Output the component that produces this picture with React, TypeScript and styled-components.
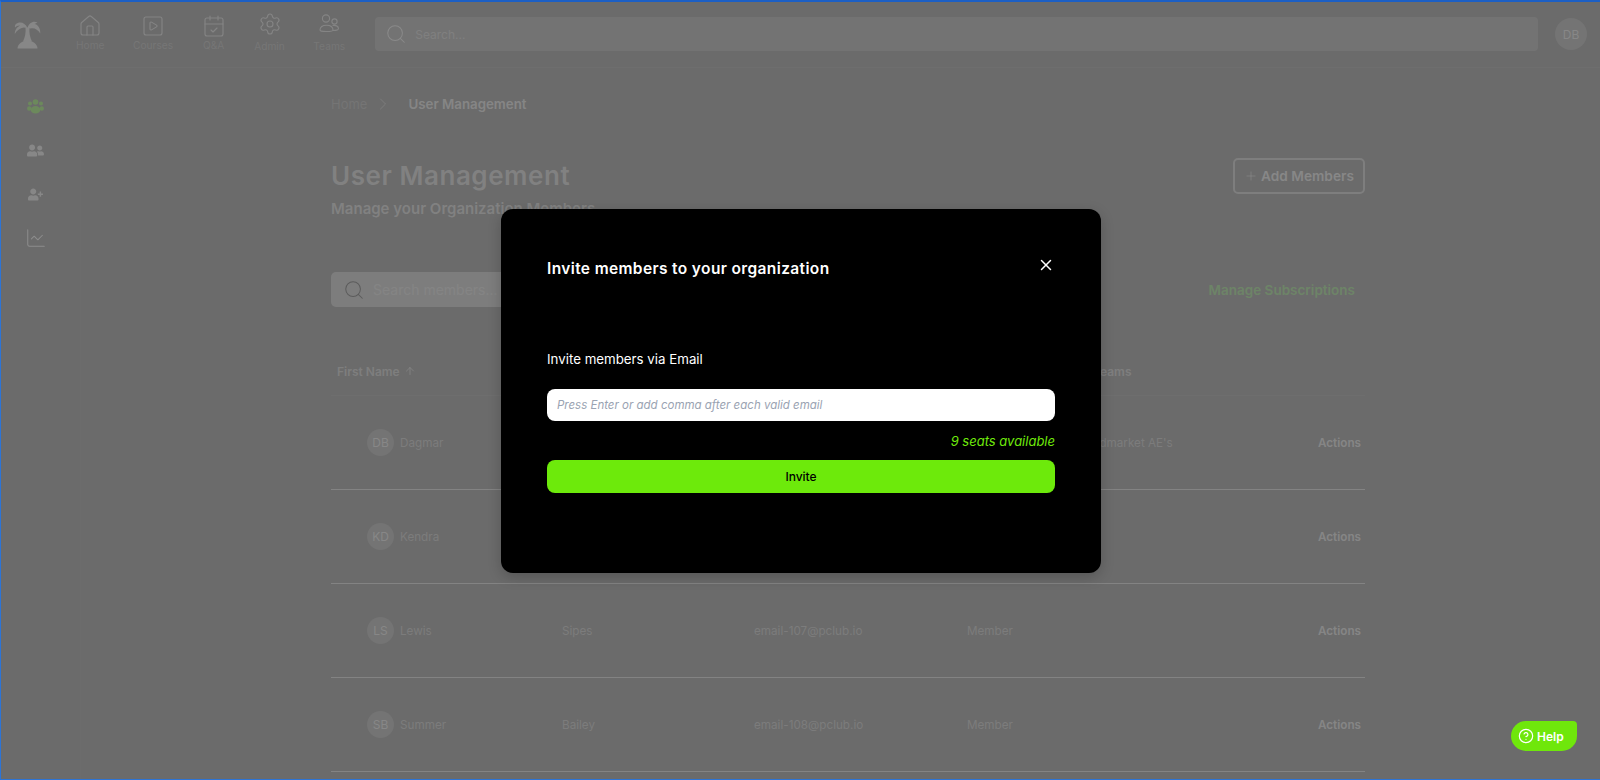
import React from "react";
import styled, { createGlobalStyle } from "styled-components";
import { Home, SquarePlay, CalendarCheck, Settings, Search, ChevronRight, X, Plus, ArrowUp, ChartLine, CircleHelp } from "lucide-react";
import { FaUserFriends, FaUserPlus } from "react-icons/fa";

const Global = createGlobalStyle`
  * { box-sizing: border-box; }
  html, body { margin: 0; padding: 0; height: 100%; overflow: hidden; }
  body { font-family: Inter, "Liberation Sans", sans-serif; background: #6b6b6b; }
`;

const Frame = styled.div`
  position: relative;
  width: 100vw;
  height: 100vh;
  overflow: hidden;
  background: #6b6b6b;
  border-top: 2px solid #1c5fc4;
  border-left: 1px solid #2c74d6;
  border-bottom: 1px solid #2c74d6;
`;

const TopBar = styled.header`
  height: 66px;
  display: flex;
  align-items: stretch;
  padding: 0 13px 0 13px;
  border-bottom: 1px solid #757575;
`;

const Logo = styled.svg`
  width: 27px;
  height: 29px;
  margin-top: 18px;
  color: #c8c8c8;
  flex: none;
`;

const Nav = styled.nav`
  display: flex;
  gap: 28.5px;
  margin-left: 35px;
  margin-right: 30px;
`;

const NavItem = styled.div<{ $low?: boolean }>`
  display: flex;
  flex-direction: column;
  align-items: center;
  color: #c0c0c0;
  font-size: 10.2px;
  line-height: 14px;
  padding-top: ${(p) => (p.$low ? 10 : 12)}px;
  span { margin-top: ${(p) => (p.$low ? 3 : 0)}px; color: #909090; }
  svg { display: block; }
`;

const TopSearch = styled.div`
  flex: 1;
  height: 34px;
  margin-top: 15px;
  border-radius: 4px;
  background: #878787;
  display: flex;
  align-items: center;
  padding-left: 10px;
  gap: 8px;
  font-size: 12px;
  color: #b0b0b0;
  svg { color: #d0d0d0; }
`;

const Avatar = styled.div<{ $size: number; $font: number }>`
  width: ${(p) => p.$size}px;
  height: ${(p) => p.$size}px;
  flex: none;
  border-radius: 50%;
  background: #898989;
  color: #c8c8c8;
  font-size: ${(p) => p.$font}px;
  display: flex;
  align-items: center;
  justify-content: center;
`;

const TopAvatar = styled(Avatar)`
  margin-top: 16px;
  margin-left: 17px;
`;

const Body = styled.div`
  display: flex;
`;

const Sidebar = styled.aside`
  width: 80px;
  height: 720px;
  flex: none;
  border-right: 1px solid #6f6f6f;
  display: flex;
  flex-direction: column;
  align-items: center;
  padding-top: 16px;
  padding-right: 11px;
`;

const SideItem = styled.div<{ $green?: boolean }>`
  height: 44px;
  display: flex;
  align-items: center;
  justify-content: center;
  color: ${(p) => (p.$green ? "#71d03a" : "#c8c8c8")};
`;

const ChartIcon = styled(ChartLine)`
  margin-left: 2px;
  color: #dcdcdc;
`;

const Main = styled.main`
  width: 1034px;
  margin-left: 250px;
  padding-top: 26px;
  flex: none;
`;

const Crumbs = styled.div`
  display: flex;
  align-items: center;
  height: 20px;
  font-size: 13px;
  color: #8c8c8c;
  svg { margin: 0 15px 0 6px; color: #b0b0b0; }
  b { font-size: 13.3px; font-weight: 600; color: #c4c4c4; }
`;

const HeadRow = styled.div`
  display: flex;
  justify-content: space-between;
  margin-top: 44px;
`;

const Title = styled.h1`
  margin: 0;
  padding-top: 1px;
  font-size: 26px;
  line-height: 34px;
  font-weight: 600;
  color: #b4b4b4;
  letter-spacing: 0.55px;
`;

const Subtitle = styled.div`
  margin-top: 6px;
  font-size: 15px;
  line-height: 20px;
  font-weight: 600;
  color: #b4b4b4;
`;

const AddButton = styled.div`
  width: 132px;
  height: 36px;
  border: 2px solid #aaaaaa;
  border-radius: 5px;
  display: flex;
  align-items: center;
  justify-content: center;
  gap: 3px;
  font-size: 13.7px;
  font-weight: 600;
  color: #c8c8c8;
`;

const Toolbar = styled.div`
  display: flex;
  justify-content: space-between;
  align-items: center;
  margin-top: 53px;
  padding-right: 10px;
`;

const MemberSearch = styled.div`
  width: 320px;
  height: 35px;
  border-radius: 5px;
  background: #a8a8a8;
  display: flex;
  align-items: center;
  padding-left: 12px;
  gap: 8px;
  font-size: 14px;
  color: #c0c0c0;
`;

const ManageLink = styled.div`
  font-size: 13.5px;
  font-weight: 600;
  color: #74c060;
`;

const TableRow = styled.div<{ $head?: boolean }>`
  display: grid;
  grid-template-columns: 225px 192px 213px 119px 1fr;
  align-items: center;
  height: ${(p) => (p.$head ? 48 : 94)}px;
  padding: 0 4px 0 6px;
  border-bottom: 1px solid ${(p) => (p.$head ? "#757575" : "#bdbdbd")};
  font-size: 11.7px;
  color: #a4a4a4;
  margin-top: ${(p) => (p.$head ? 41 : 0)}px;
`;

const HeadCell = styled.div`
  display: flex;
  align-items: center;
  gap: 4px;
  font-size: 12px;
  font-weight: 600;
  color: #acacac;
  svg { color: #c8c8c8; margin-bottom: 2px; }
`;

const TeamsHead = styled(HeadCell)`
  padding-left: 7px;
`;

const NameCell = styled.div`
  display: flex;
  align-items: center;
  gap: 6px;
  padding-left: 30px;
`;

const TeamActions = styled.div`
  display: flex;
  justify-content: space-between;
  align-items: center;
`;

const ActionCell = styled.div`
  text-align: right;
  font-weight: 600;
  color: #c4c4c4;
`;

const Overlay = styled.div`
  position: absolute;
  inset: 0;
  background: rgba(107, 107, 107, 0.7);
  display: flex;
  align-items: center;
  justify-content: center;
`;

const Modal = styled.div`
  width: 600px;
  height: 364px;
  margin-left: 1px;
  background: #000;
  border-radius: 12px;
  padding: 47px 46px 0;
  display: flex;
  flex-direction: column;
  box-shadow: 0 4px 14px rgba(0, 0, 0, 0.2);
`;

const ModalHead = styled.div`
  display: flex;
  justify-content: space-between;
  align-items: flex-start;
  height: 28px;
`;

const ModalTitle = styled.h2`
  margin: 0;
  font-size: 15.5px;
  line-height: 26px;
  font-weight: 600;
  color: #fff;
  letter-spacing: 0.37px;
`;

const Close = styled.div`
  color: #fff;
  width: 18px;
  height: 18px;
  svg { display: block; }
`;

const Label = styled.div`
  margin-top: 66px;
  font-size: 13.3px;
  line-height: 18px;
  color: #fff;
`;

const EmailInput = styled.div`
  margin-top: 21px;
  height: 32px;
  background: #fff;
  border-radius: 8px;
  display: flex;
  align-items: center;
  padding-left: 10px;
  font-size: 11.5px;
  font-style: italic;
  color: #9aa3b2;
`;

const Seats = styled.div`
  margin-top: 10px;
  text-align: right;
  font-size: 13px;
  line-height: 20px;
  font-style: italic;
  color: #6fea0b;
`;

const InviteButton = styled.div`
  margin-top: 9px;
  height: 33px;
  background: #6dea0b;
  border-radius: 8px;
  display: flex;
  align-items: center;
  justify-content: center;
  font-size: 12px;
  font-weight: 500;
  color: #000;
`;

const HelpButton = styled.div`
  position: absolute;
  left: 1510px;
  top: 719px;
  width: 66px;
  height: 30px;
  background: #6fe70b;
  border-radius: 15px 4px 15px 15px;
  display: flex;
  align-items: center;
  padding-left: 7px;
  gap: 3px;
  font-size: 12px;
  font-weight: 600;
  color: #fff;
`;

const rows = [
  { i: "DB", f: "Dagmar", l: "Bode", e: "email-105@pclub.io", r: "Admin", t: "Midmarket AE's" },
  { i: "KD", f: "Kendra", l: "Dare", e: "email-106@pclub.io", r: "Member", t: "" },
  { i: "LS", f: "Lewis", l: "Sipes", e: "email-107@pclub.io", r: "Member", t: "" },
  { i: "SB", f: "Summer", l: "Bailey", e: "email-108@pclub.io", r: "Member", t: "" },
];

const Palm = () => (
  <Logo viewBox="0 0 27 29" fill="currentColor">
    <path d="M13.500 8C11 2.500 5.500 1 1.500 4.500 1 5 .8 6.500 1 7.500c1.500-1.500 3-2.200 5-2C3 7 .7 10 .8 14c2-3.500 5-6 9-6.500z" />
    <path d="M13.500 8c1.500-5.500 6-7.500 10-5.500l-3 1.500c3 .5 6 3.500 5.800 9.500-2.500-4-6-6-9.800-5z" />
    <path d="M11.500 7.500h4c-.5 5 .5 10 2.500 14H9c2-4 3-9 2.500-14z" />
    <path d="M3.500 28.500c0-4 4.500-8 10-8s10 4 10 8z" />
  </Logo>
);

const TeamIcon = () => (
  <svg width="24" height="24" viewBox="0 0 24 24" fill="none" stroke="currentColor" strokeWidth="1.1">
    <circle cx="9" cy="6.500" r="3.600" />
    <circle cx="17.500" cy="9.500" r="2.600" />
    <path d="M3 18c0-3 2.500-4.800 6.500-4.800S16 15 16 18c0 1-1 1.500-6.500 1.500S3 19 3 18z" />
    <path d="M15.500 13.500c3-.5 6 .5 6 3 0 1.500-2 2-5.500 2" />
  </svg>
);

const GroupIcon = () => (
  <svg width="17" height="15" viewBox="0 0 17 15" fill="currentColor">
    <circle cx="8.500" cy="3" r="2.800" />
    <circle cx="3" cy="4.600" r="2" />
    <circle cx="14" cy="4.600" r="2" />
    <ellipse cx="8.500" cy="10.800" rx="4.800" ry="3.700" />
    <ellipse cx="2.200" cy="9.500" rx="2.100" ry="2.300" />
    <ellipse cx="14.800" cy="9.500" rx="2.100" ry="2.300" />
  </svg>
);

function TeamAndActions({ team }: { team: string }) {
  return (
    <TeamActions>
      <span>{team}</span>
      <ActionCell>Actions</ActionCell>
    </TeamActions>
  );
}

export default function App() {
  return (
    <>
      <Global />
      <Frame>
        <TopBar>
          <Palm />
          <Nav>
            <NavItem><Home size={24} strokeWidth={1.1} /><span>Home</span></NavItem>
            <NavItem><SquarePlay size={24} strokeWidth={1.1} /><span>Courses</span></NavItem>
            <NavItem><CalendarCheck size={24} strokeWidth={1.1} /><span>Q&amp;A</span></NavItem>
            <NavItem $low><Settings size={24} strokeWidth={1.1} /><span>Admin</span></NavItem>
            <NavItem $low><TeamIcon /><span>Teams</span></NavItem>
          </Nav>
          <TopSearch><Search size={22} strokeWidth={1.1} />Search...</TopSearch>
          <TopAvatar $size={32} $font={12}>DB</TopAvatar>
        </TopBar>
        <Body>
          <Sidebar>
            <SideItem $green><GroupIcon /></SideItem>
            <SideItem><FaUserFriends size={17} /></SideItem>
            <SideItem><FaUserPlus size={15} /></SideItem>
            <SideItem><ChartIcon size={22} strokeWidth={1.1} /></SideItem>
          </Sidebar>
          <Main>
            <Crumbs>Home<ChevronRight size={20} strokeWidth={1} /><b>User Management</b></Crumbs>
            <HeadRow>
              <div>
                <Title>User Management</Title>
                <Subtitle>Manage your Organization Members</Subtitle>
              </div>
              <AddButton><Plus size={14} strokeWidth={1.2} />Add Members</AddButton>
            </HeadRow>
            <Toolbar>
              <MemberSearch><Search size={22} strokeWidth={1.1} color="#383838" />Search members...</MemberSearch>
              <ManageLink>Manage Subscriptions</ManageLink>
            </Toolbar>
            <TableRow $head>
              <HeadCell>First Name <ArrowUp size={12} strokeWidth={1.5} /></HeadCell>
              <HeadCell>Last Name</HeadCell>
              <HeadCell>Email</HeadCell>
              <HeadCell>Role</HeadCell>
              <TeamsHead>Teams</TeamsHead>
            </TableRow>
            {rows.map((r) => (
              <TableRow key={r.i}>
                <NameCell><Avatar $size={27} $font={12}>{r.i}</Avatar>{r.f}</NameCell>
                <div>{r.l}</div>
                <div>{r.e}</div>
                <div>{r.r}</div>
                <TeamAndActions team={r.t} />
              </TableRow>
            ))}
          </Main>
        </Body>
        <Overlay>
          <Modal>
            <ModalHead>
              <ModalTitle>Invite members to your organization</ModalTitle>
              <Close><X size={18} strokeWidth={2} /></Close>
            </ModalHead>
            <Label>Invite members via Email</Label>
            <EmailInput>Press Enter or add comma after each valid email</EmailInput>
            <Seats>9 seats available</Seats>
            <InviteButton>Invite</InviteButton>
          </Modal>
        </Overlay>
        <HelpButton><CircleHelp size={16} strokeWidth={1.8} />Help</HelpButton>
      </Frame>
    </>
  );
}
